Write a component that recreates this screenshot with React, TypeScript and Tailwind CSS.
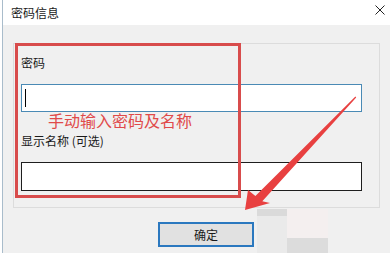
export default function App() {
  return (
    <div className="relative w-[390px] h-[253px] overflow-hidden bg-white pl-[2px] font-['Noto_Sans_CJK_SC','Noto_Sans',sans-serif] text-[#1a1a1a]">
      <div className="h-full border-l border-[#a9bccb] bg-[#f0f0f0]">
        {/* title bar */}
        <div className="h-[25px] bg-white flex items-center justify-between pl-[8px] pr-[4px]">
          <span className="text-[12px] leading-[16px]">密码信息</span>
          <svg width="10" height="10" viewBox="0 0 10 10" className="mb-[6px] mr-[1px]">
            <path d="M0.5 0.5 L9.5 9.5 M9.5 0.5 L0.5 9.5" stroke="#222" strokeWidth="1" />
          </svg>
        </div>

        {/* group box */}
        <div className="ml-[10px] mt-[18px] w-[367px] h-[165px] border border-[#dcdcdc] pl-[7px] pt-[11px] text-[12px]">
          <div className="leading-[16px]">密码</div>
          <div className="mt-[13px] w-[341px] h-[28px] bg-white border border-[#4a8ab5] flex items-center pl-[3px]">
            <div className="w-px h-[18px] bg-black" />
          </div>
          <div className="ml-[27px] text-[16px] leading-[16px] text-[#e04a4a]">手动输入密码及名称</div>
          <div className="mt-[5px] leading-[16px]">显示名称 (可选)</div>
          <div className="mt-[13px] w-[341px] h-[29px] bg-white border border-[#1e1e1e]" />
        </div>

        {/* button */}
        <button className="ml-[155px] mt-[14px] w-[96px] h-[25px] border-2 border-[#2b78bf] bg-[#e1e1e1] text-[12px] leading-[16px] flex items-center justify-center">
          确定
        </button>
      </div>

      {/* annotation: red box */}
      <div className="absolute left-[15px] top-[43px] w-[226px] h-[155px] border-[3px] border-[#d84c4c]" />

      {/* blurred artifacts */}
      <div className="absolute left-[257px] top-[209px] w-[30px] h-[7px] bg-[#dadada]" />
      <div className="absolute left-[257px] top-[216px] w-[30px] h-[37px] bg-[#eaeaea]" />
      <div className="absolute left-[287px] top-[209px] w-[41px] h-[29px] bg-[#f4efef]" />
      <div className="absolute left-[287px] top-[238px] w-[41px] h-[15px] bg-[#dcdcdc]" />

      {/* annotation: red arrow */}
      <svg className="absolute left-0 top-0" width="390" height="253" viewBox="0 0 390 253">
        <polygon
          points="245,210 248,190 255.4,196.1 355.4,96.6 356.2,97.4 262.3,201.2 270,203"
          fill="#e84040"
        />
      </svg>
    </div>
  )
}
